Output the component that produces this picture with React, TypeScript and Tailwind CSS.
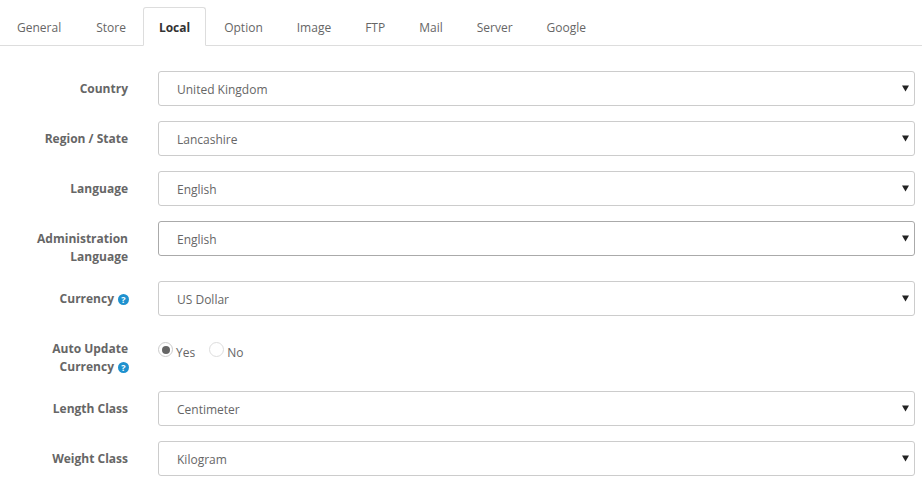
const tabs = ['General', 'Store', 'Local', 'Option', 'Image', 'FTP', 'Mail', 'Server', 'Google'];

function Help() {
  return (
    <span className="inline-flex w-[11px] h-[11px] rounded-full bg-[#1e91cf] text-white text-[9px] font-bold leading-none items-center justify-center ml-1 -mr-[1px] align-[0px]">
      ?
    </span>
  );
}

function Select({ value, focus }: { value: string; focus?: boolean }) {
  return (
    <div className="relative flex-1">
      <select
        defaultValue={value}
        className={`w-full h-[35px] appearance-none bg-white rounded-[3px] border pl-[18px] pt-[2px] text-xs text-[#666] outline-none ${
          focus ? 'border-[#aaa]' : 'border-[#ccc]'
        }`}
      >
        <option>{value}</option>
      </select>
      <svg className="absolute right-[6px] top-[14px]" width="7" height="7" viewBox="0 0 7 7">
        <path d="M0 0.5h7L3.5 6.5z" fill="#222" />
      </svg>
    </div>
  );
}

function Row({ label, help, className, children }: { label: React.ReactNode; help?: boolean; className?: string; children: React.ReactNode }) {
  return (
    <div className={`flex ${className ?? 'mb-[15px]'}`}>
      <label className="w-[128px] text-right font-bold text-xs leading-[18px] text-[#666] pt-[9px] shrink-0">
        {label}
        {help && <Help />}
      </label>
      <div className="flex-1 ml-[30px] flex">{children}</div>
    </div>
  );
}

export default function App() {
  return (
    <div className="w-[922px] h-[491px] bg-white overflow-hidden font-['Open_Sans',sans-serif] text-xs text-[#666]">
      <ul className="flex pt-[7px] border-b border-[#ddd] h-[46px]">
        {tabs.map((t) =>
          t === 'Local' ? (
            <li key={t} className="h-[39px] px-[15px] mr-[1px] border border-[#ddd] border-b-white bg-white rounded-t-[3px] font-bold text-[#333] leading-[40px]">
              {t}
            </li>
          ) : (
            <li key={t} className={`h-[38px] px-[17px] leading-[41px] text-[#666] ${t === 'General' ? 'mr-[1px]' : ''}`}>
              {t}
            </li>
          )
        )}
      </ul>

      <div className="pt-[25px] pr-[7px]">
        <Row label="Country"><Select value="United Kingdom" /></Row>
        <Row label="Region / State"><Select value="Lancashire" /></Row>
        <Row label="Language"><Select value="English" /></Row>
        <Row label={<>Administration<br />Language</>} className="h-[45px] mb-[15px]"><Select value="English" focus /></Row>
        <Row label="Currency" help><Select value="US Dollar" /></Row>
        <Row label={<>Auto Update<br />Currency</>} help className="h-[45px] mb-[15px]">
          <div className="flex items-start pt-[11px]">
            <span className="w-[15px] h-[15px] rounded-full border border-[#ccc] flex items-center justify-center">
              <span className="w-[8px] h-[8px] rounded-full bg-[#666]" />
            </span>
            <span className="ml-[3px] mt-[3px]">Yes</span>
            <span className="w-[15px] h-[15px] rounded-full border border-[#ddd] ml-[14px]" />
            <span className="ml-[3px] mt-[3px]">No</span>
          </div>
        </Row>
        <Row label="Length Class"><Select value="Centimeter" /></Row>
        <Row label="Weight Class"><Select value="Kilogram" /></Row>
      </div>
    </div>
  );
}
